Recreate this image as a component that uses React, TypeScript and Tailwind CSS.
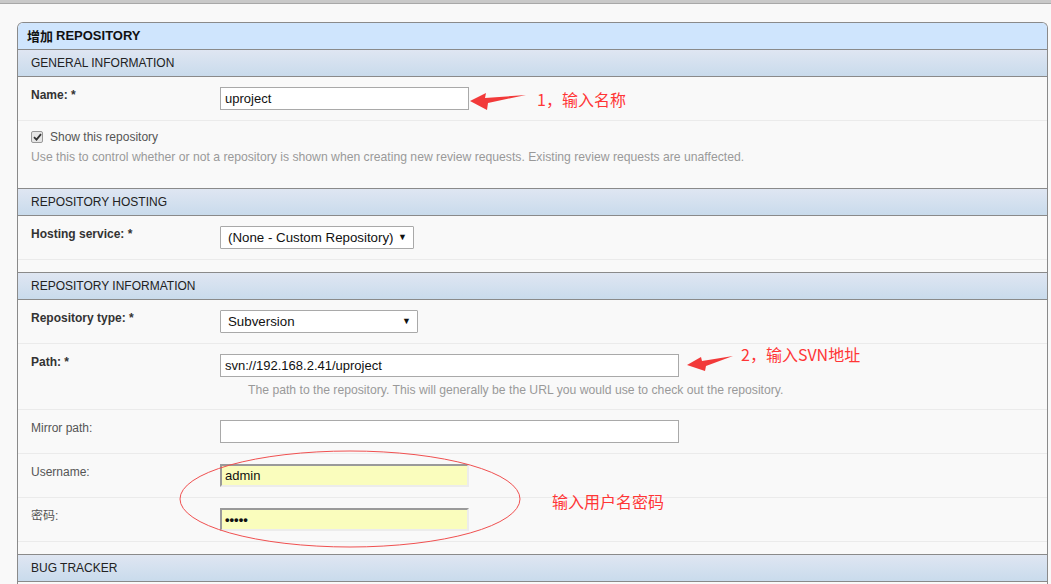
import React from "react";

const font = { fontFamily: '"Liberation Sans", Arial, "Noto Sans CJK SC", sans-serif' };
const cjk = { fontFamily: '"Noto Sans CJK SC", "Liberation Sans", sans-serif' };

function SectionHeader({ title, first }: { title: string; first?: boolean }) {
  return (
    <div
      className={
        "flex items-center pl-[13px] text-[12px] text-[#222] border-b border-[#8a8a8a] bg-gradient-to-b from-[#dfe6f2] to-[#c9dbec] " +
        (first ? "h-[27px]" : "h-[28px] border-t")
      }
    >
      {title}
    </div>
  );
}

function Row({
  label,
  required,
  children,
}: {
  label: string;
  required?: boolean;
  children: React.ReactNode;
}) {
  return (
    <div className="flex items-start pl-[13px] pt-[10px] pb-[10px] border-b border-[#ebebeb]">
      <div
        className={
          "w-[189px] pt-[1px] text-[12px] leading-[14px] " +
          (required ? "font-bold text-[#333]" : "text-[#555]")
        }
      >
        {label}
      </div>
      <div className="flex flex-col">{children}</div>
    </div>
  );
}

function TextBox({ value, w }: { value: string; w: string }) {
  return (
    <div
      className={
        "h-[23px] border border-[#a9a9a9] bg-white flex items-center pl-[4px] text-[13px] text-[#111] " + w
      }
    >
      {value}
    </div>
  );
}

function YellowBox({ children }: { children: React.ReactNode }) {
  return (
    <div className="h-[23px] w-[249px] bg-[#fafdbd] border-t-2 border-l-2 border-b-2 border-r-2 border-t-[#9a9a9a] border-l-[#9a9a9a] border-b-[#ececec] border-r-[#ececec] flex items-center pl-[3px] text-[13px] text-[#111]">
      {children}
    </div>
  );
}

function SelectBox({ value, w }: { value: string; w: string }) {
  return (
    <div
      className={
        "h-[23px] border border-[#a9a9a9] bg-white flex items-center justify-between pl-[7px] pr-[6px] text-[13.3px] text-[#111] rounded-[1px] " +
        w
      }
    >
      <span>{value}</span>
      <span className="text-[9px] text-[#111]">▼</span>
    </div>
  );
}

export default function App() {
  return (
    <div className="relative w-[1051px] h-[584px] overflow-hidden bg-[#f9f9f9]" style={font}>
      <div className="h-[4px] bg-[#c9c9c9] border-b border-[#a8a8a8]" />
      <div className="ml-[17px] mt-[18px] w-[1031px] border-l border-r border-t border-[#8a8a8a] rounded-t-[6px] overflow-hidden">
        <div className="h-[27px] bg-[#cfe5fd] border-b border-[#8a8a8a] flex items-center pl-[9px] text-[13px] font-bold text-[#111]">
          <span style={cjk} className="mr-[3px]">增加</span>
          <span>REPOSITORY</span>
        </div>

        <SectionHeader title="GENERAL INFORMATION" first />
        <Row label="Name: *" required>
          <TextBox value="uproject" w="w-[249px]" />
        </Row>
        <div className="pl-[13px] pt-[9px] h-[67px]">
          <div className="flex items-center h-[14px]">
            <div className="w-[12px] h-[12px] rounded-[2px] border border-[#999] bg-[#e6e6e6] flex items-center justify-center">
              <svg width="9" height="8" viewBox="0 0 9 8">
                <path d="M1 4.2 L3.5 6.6 L8 1.2" fill="none" stroke="#333" strokeWidth="1.8" />
              </svg>
            </div>
            <span className="ml-[7px] text-[12px] text-[#555]">Show this repository</span>
          </div>
          <div className="mt-[6px] text-[12.2px] text-[#999] leading-[14px]">
            Use this to control whether or not a repository is shown when creating new review requests. Existing review requests are unaffected.
          </div>
        </div>

        <SectionHeader title="REPOSITORY HOSTING" />
        <Row label="Hosting service: *" required>
          <SelectBox value="(None - Custom Repository)" w="w-[194px]" />
        </Row>
        <div className="h-[12px]" />

        <SectionHeader title="REPOSITORY INFORMATION" />
        <Row label="Repository type: *" required>
          <SelectBox value="Subversion" w="w-[198px]" />
        </Row>
        <Row label="Path: *" required>
          <TextBox value="svn://192.168.2.41/uproject" w="w-[459px]" />
          <div className="mt-[6px] mb-[2px] ml-[28px] text-[12.2px] leading-[14px] text-[#999]">
            The path to the repository. This will generally be the URL you would use to check out the repository.
          </div>
        </Row>
        <Row label="Mirror path:">
          <TextBox value="" w="w-[459px]" />
        </Row>
        <Row label="Username:">
          <YellowBox>admin</YellowBox>
        </Row>
        <Row label="密码:">
          <YellowBox>
            <span className="text-[13px] font-bold leading-[13px]">•••••</span>
          </YellowBox>
        </Row>
        <div className="h-[12px]" />

        <SectionHeader title="BUG TRACKER" />
        <div className="h-[20px]" />
      </div>

      <svg className="absolute left-0 top-0 pointer-events-none" width="1051" height="584">
        <polygon points="470,101 486,93 485,98 526,95 488,103 487,110" fill="#f23a3a" />
        <polygon points="687,365 701,357 702,361 733,356 706,366 705,371" fill="#f23a3a" />
        <ellipse cx="350" cy="499" rx="170" ry="48" fill="none" stroke="#f05050" strokeWidth="1" />
      </svg>
      <div className="absolute left-[537px] top-[88px] text-[16px] leading-[22px] text-[#ff3636]" style={cjk}>
        1，输入名称
      </div>
      <div className="absolute left-[741px] top-[343px] text-[16px] leading-[22px] text-[#ff3636]" style={cjk}>
        2，输入SVN地址
      </div>
      <div className="absolute left-[552px] top-[490px] text-[16px] leading-[22px] text-[#ff3636]" style={cjk}>
        输入用户名密码
      </div>
    </div>
  );
}
